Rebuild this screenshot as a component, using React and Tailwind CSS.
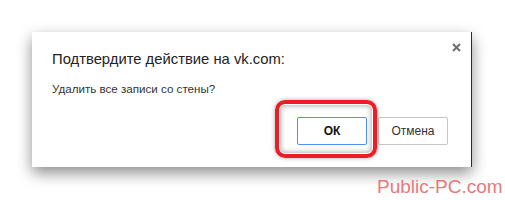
import React from 'react';

const App = () => {
  return (
    <div className="relative w-[505px] h-[200px] bg-white overflow-hidden" style={{ fontFamily: '"Liberation Sans", Arial, sans-serif' }}>
      <div className="pt-[32px] pl-[32px]">
        {/* Dialog */}
        <div className="relative w-[440px] h-[135px] bg-white border-r border-[#1e2d4a] shadow-[0_6px_14px_rgba(0,0,0,0.45)] pt-[17px] pl-[20px] pr-[23px]">
          <button className="absolute top-[9px] right-[9px] w-[12px] h-[12px] flex items-center justify-center">
            <svg width="9" height="9" viewBox="0 0 9 9">
              <path d="M1 1 L8 8 M8 1 L1 8" stroke="#6f6f6f" strokeWidth="2" />
            </svg>
          </button>
          <div className="text-[14.8px] leading-[20px] text-[#222]">Подтвердите действие на vk.com:</div>
          <div className="mt-[12px] text-[11.6px] leading-[16px] text-[#333]">Удалить все записи со стены?</div>
          <div className="mt-[20px] flex justify-end gap-[11px]">
            <div className="relative">
              {/* highlight */}
              <div className="absolute left-[-22px] top-[-17px] w-[102px] h-[58px] rounded-[10px] border-[4px] border-[#ee1c24] shadow-[0_0_4px_rgba(0,0,0,0.35),inset_0_0_0_1px_#fff,inset_0_0_5px_2px_rgba(0,0,0,0.3)]" />
              <button className="w-[70px] h-[28px] bg-white border border-[#4d90fe] rounded-[2px] text-[12px] font-bold text-[#111]">ОК</button>
            </div>
            <button className="w-[70px] h-[28px] bg-white border border-[#c6c6c6] rounded-[2px] text-[12px] text-[#333]">Отмена</button>
          </div>
        </div>
      </div>
      <div className="absolute left-[377px] top-[176px] text-[19px] leading-[22px] text-[#e8797b]">
        Public-PC.com
      </div>
    </div>
  );
};

export default App;
